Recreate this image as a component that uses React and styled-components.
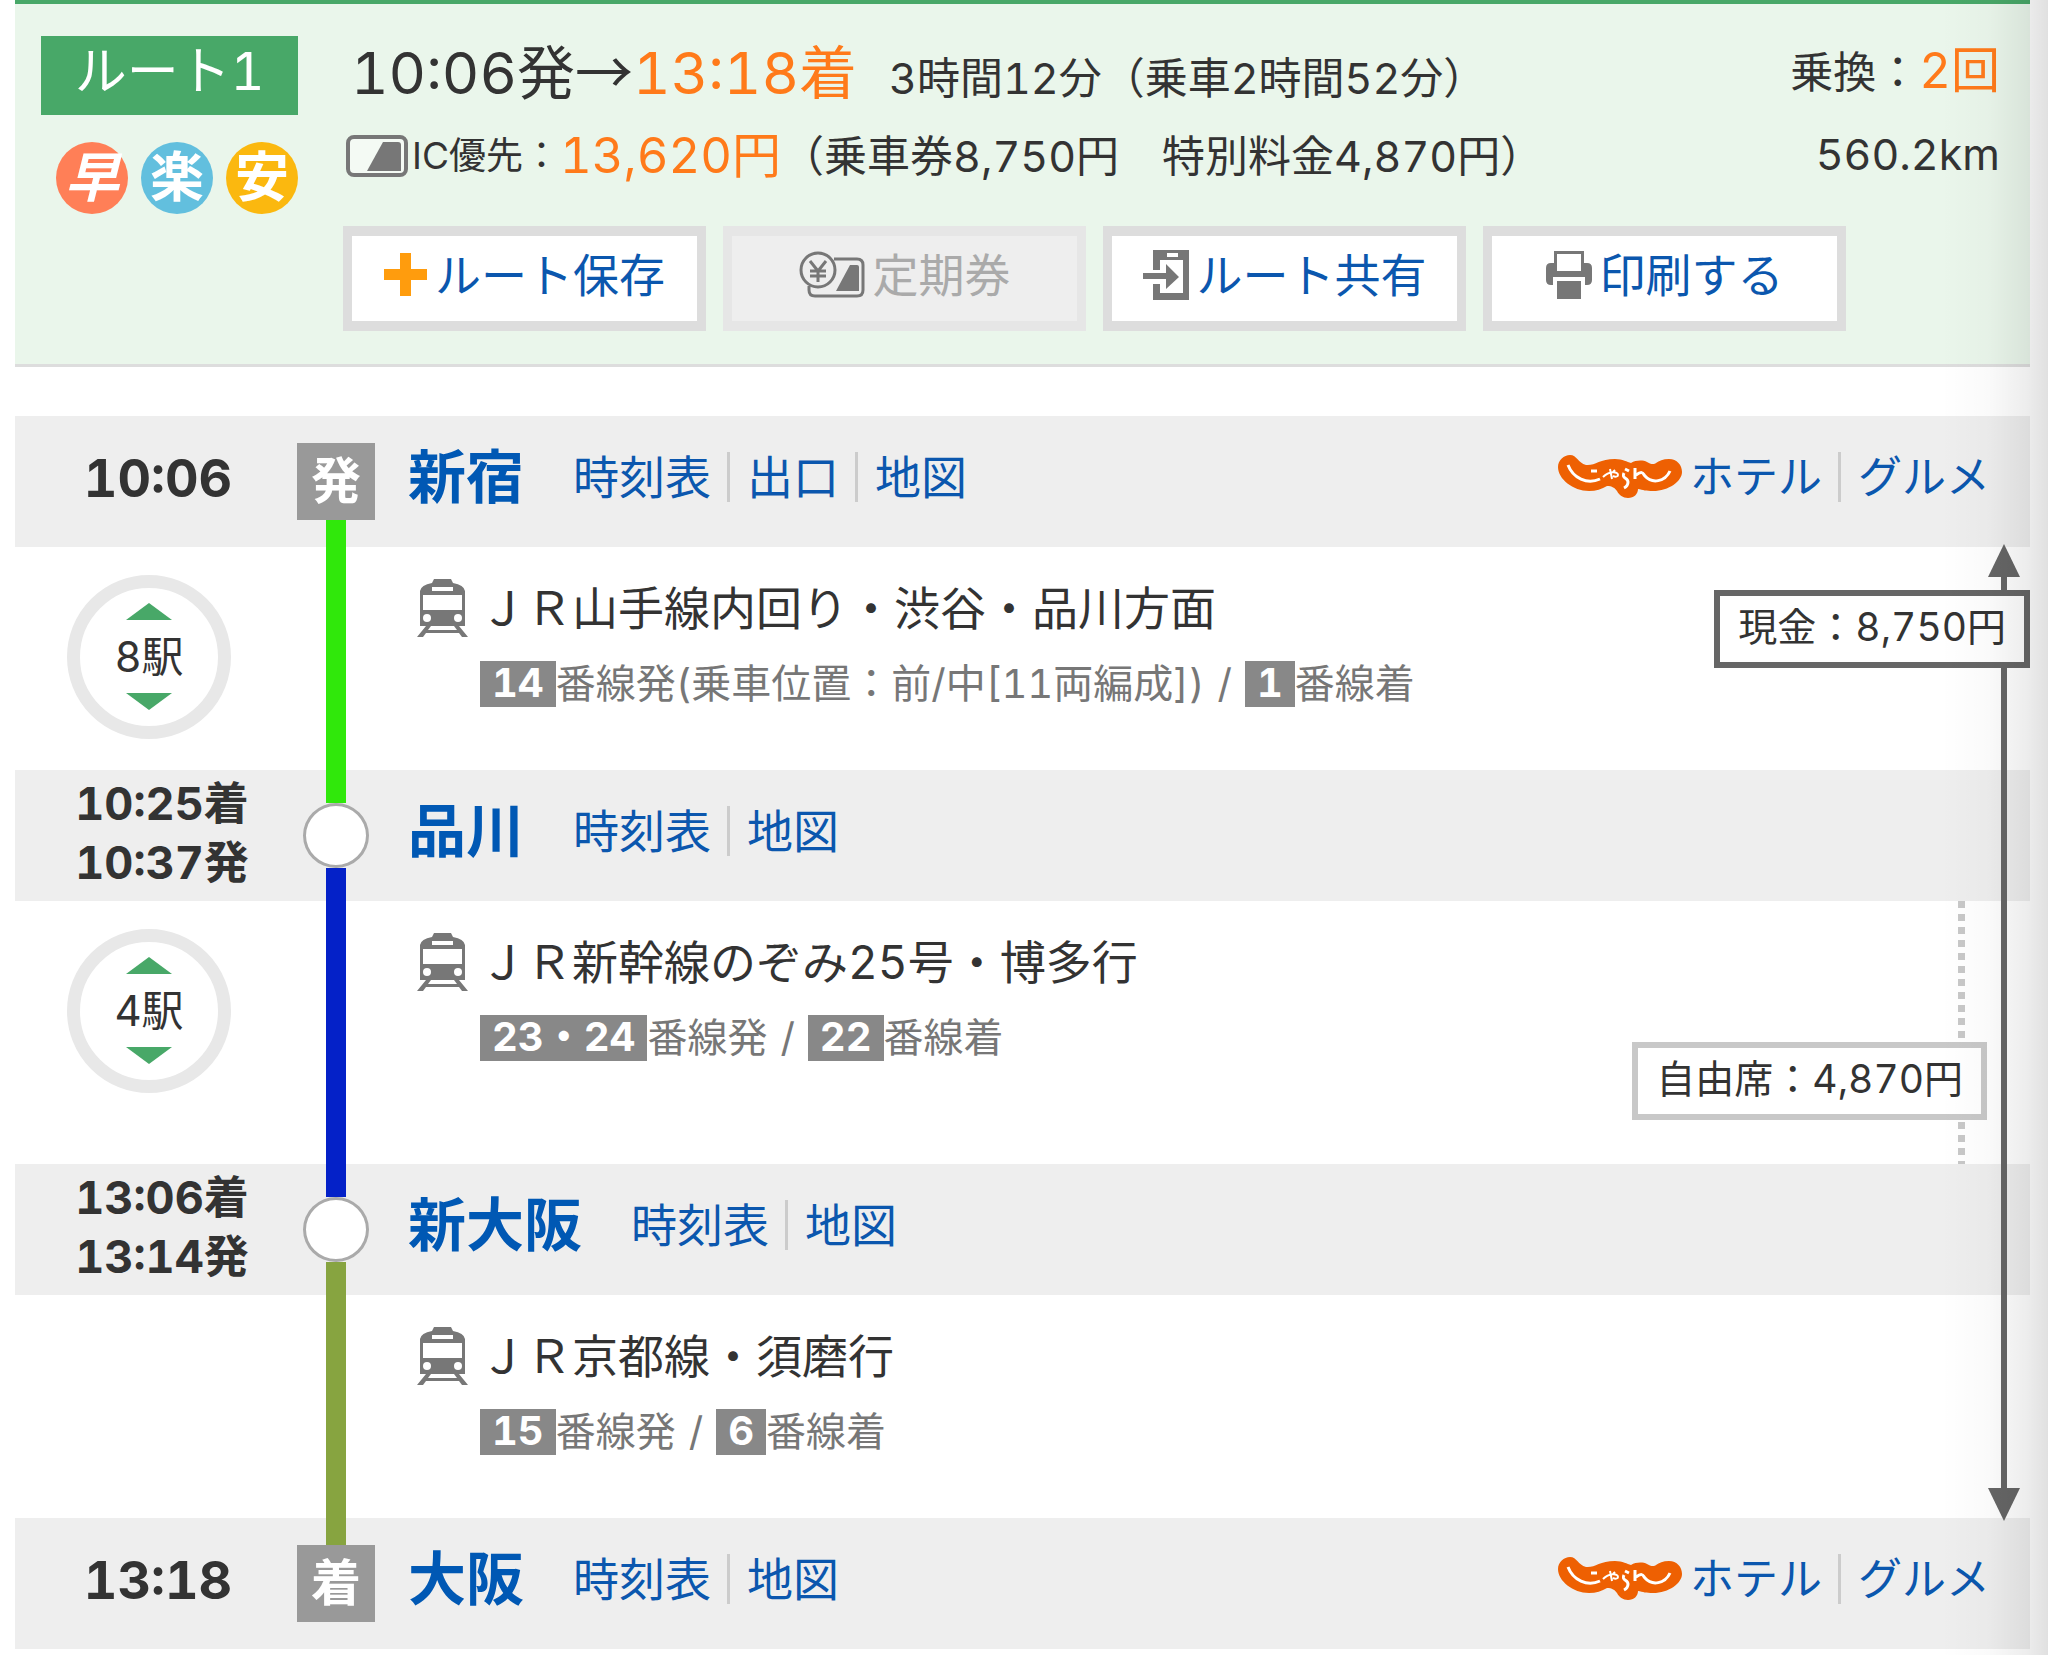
import React from 'react'
import styled, { createGlobalStyle } from 'styled-components'

const GlobalStyle = createGlobalStyle`
  * {
    box-sizing: border-box;
  }
  body {
    margin: 0;
    background: #fff;
    color: #333;
    font-family: Inter, 'Noto Sans CJK JP', sans-serif;
    font-variant-numeric: tabular-nums;
  }
  button {
    font: inherit;
    color: inherit;
    cursor: pointer;
  }
  a {
    color: #0b57ae;
    text-decoration: none;
  }
`

const Page = styled.main`
  position: relative;
  padding: 0 18px 7px 15px;
  overflow: hidden;
`
const EdgeShade = styled.div`
  position: absolute;
  top: 0;
  right: 0;
  bottom: 0;
  width: 108px;
  pointer-events: none;
  background: linear-gradient(to right, transparent, rgba(0, 0, 0, 0.02) 45%, rgba(0, 0, 0, 0.07) 80%, rgba(0, 0, 0, 0.12));
`

/* summary */
const Summary = styled.header`
  display: grid;
  grid-template-columns: 257px 1fr;
  column-gap: 45px;
  padding: 32px 30px 33px 26px;
  border-top: 4px solid #48a868;
  border-bottom: 3px solid #ddd;
  background: #eaf6eb;
`
const RouteName = styled.h1`
  margin: 0 0 27px;
  font-size: 52px;
  font-weight: 400;
  line-height: 72px;
  padding-bottom: 7px;
  text-align: center;
  color: #fff;
  background: #48a868;
`
const Marks = styled.div`
  display: flex;
  justify-content: flex-end;
  gap: 13px;
`
const Mark = styled.span`
  width: 72px;
  height: 72px;
  border-radius: 50%;
  background: ${(p) => p.$color};
  color: #fff;
  font-size: 54px;
  font-weight: 700;
  font-style: ${(p) => (p.$slanted ? 'italic' : 'normal')};
  line-height: 72px;
  text-align: center;
`
const SummaryTop = styled.div`
  display: flex;
  justify-content: space-between;
  height: 190px;
  white-space: nowrap;
`
const TimeLine = styled.div`
  display: flex;
  align-items: baseline;
  gap: 32px;
  height: 70px;
  margin: 0 0 20px 8px;
  font-size: 58px;
  line-height: 66px;
`
const Wide = styled.span`
  font-family: 'Noto Sans CJK JP', sans-serif;
`
const Hot = styled.span`
  color: #ff7a1a;
  font-size: ${(p) => p.$size || 58}px;
`
const Small = styled.span`
  font-size: 43px;
`
const FareLine = styled.div`
  display: flex;
  align-items: center;
  height: 60px;
  padding-left: 3px;
  font-size: 43px;
  line-height: 60px;
`
const FareKind = styled.span`
  margin-left: 4px;
  font-size: 37px;
`
const Actions = styled.div`
  display: flex;
  gap: 17px;
`
const ActionButton = styled.button`
  display: flex;
  align-items: center;
  justify-content: center;
  gap: 8px;
  width: 363px;
  height: 105px;
  padding: 0 0 8px;
  border: solid #ddd;
  border-width: 10px 9px;
  background: #fff;
  color: #0b57ae;
  font-size: 46px;
  line-height: 60px;
  white-space: nowrap;
  &:disabled {
    border-color: #e6e6e6;
    background: #eee;
    color: #aaa;
    cursor: default;
  }
`
const SummaryTotals = styled.div`
  text-align: right;
  font-size: 43px;
  line-height: 70px;
`
const Distance = styled.div`
  margin-top: 12px;
`

/* route */
const Route = styled.section`
  position: relative;
  margin-top: 49px;
`
const Row = styled.div`
  display: grid;
  grid-template-columns: 282px 78px 1fr;
`
const StationRow = styled(Row)`
  height: 131px;
  background: #eee;
`
const LegRow = styled(Row)`
  position: relative;
  height: ${(p) => (p.$tall ? 263 : 223)}px;
`
const Times = styled.div`
  display: flex;
  flex-direction: column;
  justify-content: center;
  padding: 0 0 6px ${(p) => (p.$single ? 4 : 12)}px;
  text-align: center;
  font-weight: 700;
  font-size: ${(p) => (p.$single ? 52 : 45)}px;
  line-height: 59px;
`
const Track = styled.div`
  display: flex;
  flex-direction: column;
  align-items: center;
`
const Line = styled.div`
  flex: 1;
  width: 20px;
  background: ${(p) => p.$color || 'transparent'};
`
const EndMark = styled.div`
  width: 78px;
  height: 77px;
  background: #999;
  color: #fff;
  font-size: 50px;
  font-weight: 700;
  line-height: 76px;
  text-align: center;
`
const StopMark = styled.div`
  width: 66px;
  height: 65px;
  border: 3px solid #aaa;
  border-radius: 50%;
  background: #fff;
`
const StationBody = styled.div`
  display: flex;
  align-items: center;
  padding: 0 40px 10px 33px;
  white-space: nowrap;
`
const StationName = styled.a`
  margin-right: 49px;
  font-size: 58px;
  font-weight: 700;
  line-height: 62px;
  color: #0058b4;
`
const Links = styled.nav`
  display: flex;
  align-items: center;
  font-size: ${(p) => p.$size || 46}px;
  line-height: 50px;
  a + a {
    margin-left: 16px;
    padding-left: 17px;
    border-left: 3px solid #ccc;
  }
`
const Nearby = styled.div`
  display: flex;
  align-items: center;
  gap: 8px;
  margin-left: auto;
`
const StopCount = styled.button`
  display: flex;
  flex-direction: column;
  align-items: center;
  justify-content: space-between;
  width: 164px;
  height: 164px;
  margin: 28px 0 0 52px;
  padding: 15px 0 16px;
  border: 13px solid #e8e8e8;
  border-radius: 50%;
  background: #fff;
  font-size: 42px;
  line-height: 50px;
`
const LegBody = styled.div`
  padding: 31px 0 0 42px;
`
const LegTitle = styled.div`
  display: flex;
  align-items: center;
  gap: 12px;
  font-size: 46px;
  line-height: 60px;
`
const Platforms = styled.div`
  display: flex;
  align-items: center;
  margin: 23px 0 0 63px;
  color: #777;
  font-size: 40px;
  line-height: 46px;
  white-space: nowrap;
`
const Platform = styled.b`
  height: 46px;
  padding: 0 12px;
  background: #888;
  color: #fff;
  line-height: 44px;
`
const Slash = styled.span`
  margin: 0 13px;
`

/* fares laid over the rows */
const CashSpan = styled.div`
  position: absolute;
  top: 128px;
  right: 10px;
  bottom: 128px;
  display: flex;
  flex-direction: column;
  align-items: center;
  width: 32px;
`
const CashLine = styled.div`
  flex: 1;
  width: 6px;
  background: #666;
`
const SeatLine = styled.div`
  position: absolute;
  top: 0;
  right: 65px;
  bottom: 0;
  width: 7px;
  background: repeating-linear-gradient(#c8c8c8 0 7px, transparent 7px 13px);
`
const FareBox = styled.div`
  position: absolute;
  top: ${(p) => p.$top}px;
  right: ${(p) => p.$right}px;
  padding: 6px 18px 10px;
  border: 6px solid ${(p) => p.$color};
  background: #fff;
  font-size: 39px;
  line-height: 50px;
  white-space: nowrap;
`

const CardIcon = () => (
  <svg width="62" height="42" viewBox="0 0 62 42" aria-hidden="true">
    <rect x="2" y="2" width="58" height="38" rx="6" fill="#f4faf4" stroke="#777" strokeWidth="4" />
    <path d="M21 36 37 7h15q3 0 3 3v26z" fill="#777" />
  </svg>
)

const PlusIcon = () => (
  <svg width="43" height="43" viewBox="0 0 43 43" aria-hidden="true">
    <path d="M16 0h11v16h16v11H27v16H16V27H0V16h16z" fill="#ff9c0d" />
  </svg>
)

const PassIcon = () => (
  <svg width="66" height="48" viewBox="0 0 66 48" fill="none" stroke="#777" strokeWidth="3" aria-hidden="true">
    <path d="M35 8h23q6 0 6 6v25q0 6-6 6H16q-6 0-6-6v-4" />
    <path d="M37 40 51 14h7q2 0 2 2v24z" fill="#777" stroke="none" />
    <circle cx="19" cy="19" r="17" />
    <path d="m11 10 8 10 8-10M19 20v11M11 20h16M11 25h16" />
  </svg>
)

const ShareIcon = () => (
  <svg width="46" height="50" viewBox="0 0 46 50" aria-hidden="true">
    <path d="M10 0h36v50H10V34h7v9h23V10H17v10h-7zM24 3v4h11V3z" fill="#777" fillRule="evenodd" />
    <path d="M0 23h23V14l13 13-13 12V29H0z" fill="#777" />
  </svg>
)

const PrinterIcon = () => (
  <svg width="46" height="48" viewBox="0 0 46 48" aria-hidden="true">
    <path d="M8 0h30v12h3q5 0 5 5v12q0 5-5 5h-2v-8H7v8H5q-5 0-5-5V17q0-5 5-5h3zM11 3v17h24V3z" fill="#777" fillRule="evenodd" />
    <path d="M11 30h24v18H11z" fill="#777" />
  </svg>
)

const TrainIcon = () => (
  <svg width="51" height="58" viewBox="0 0 51 58" aria-hidden="true">
    <path
      d="M17 0h17l2 4q11 2 12 8v35h-6l9 11h-6l-3-4H9l-3 4H0l9-11H3V12q1-6 12-8zM15 8v4h21V8zM6 16v15h39V16zM14 47l-3 4h29l-3-4z"
      fill="#777"
      fillRule="evenodd"
    />
    <circle cx="10" cy="39" r="4" fill="#fff" />
    <circle cx="41" cy="39" r="4" fill="#fff" />
  </svg>
)

const Triangle = ({ down, width = 46, height = 17, color = '#48a868' }) => (
  <svg width={width} height={height} viewBox="0 0 46 17" preserveAspectRatio="none" aria-hidden="true">
    <path d={down ? 'M0 0h46L23 17z' : 'M0 17h46L23 0z'} fill={color} />
  </svg>
)

const JalanLogo = () => (
  <svg width="124" height="44" viewBox="0 0 124 44" role="img" aria-label="じゃらん">
    <path
      d="M0 12C0 5 6 0 12 0c7 0 8 8 16 10 9 1 13-6 29-6 8 0 12 3 16 4 5-3 12-3 16-1 3 2 7 3 9 1 3-2 7-4 13-4 8 0 13 6 13 13 0 9-13 19-29 19-7 0-10-1-15-2 0 5-4 9-10 9-5 0-9-3-11-7-2-3-5-5-10-5-5 3-11 5-18 5C15 36 0 24 0 12z"
      fill="#ee6002"
    />
    <g fill="none" stroke="#fff" strokeWidth="3">
      <path d="M10 10c5 13 19 20 32 14" />
      <path d="M33 16h6" />
      <path d="M45 22c6-6 15-6 15-2 0 2-3 2-5 1M52 14l2 10M57 15l-2 2" strokeWidth="2" />
      <path d="M67 14l4 2M66 18c-3 6 4 4 4 9q0 4-4 6" />
      <path d="M77 13v11M78 20c7-5 7-1 9 1 7 8 20 6 25-5" />
    </g>
  </svg>
)

const GREEN = '#30e80b'
const BLUE = '#0421c8'
const OLIVE = '#87a440'

const Station = ({ times, mark, name, links, above, below, nearby }) => (
  <StationRow>
    <Times $single={times.length === 1}>
      {times.map((time) => (
        <div key={time}>{time}</div>
      ))}
    </Times>
    <Track>
      <Line $color={above} />
      {mark ? <EndMark>{mark}</EndMark> : <StopMark />}
      <Line $color={below} />
    </Track>
    <StationBody>
      <StationName href="#">{name}</StationName>
      <Links>
        {links.map((link) => (
          <a href="#" key={link}>{link}</a>
        ))}
      </Links>
      {nearby && (
        <Nearby>
          <JalanLogo />
          <Links $size={44}>
            <a href="#">ホテル</a>
            <a href="#">グルメ</a>
          </Links>
        </Nearby>
      )}
    </StationBody>
  </StationRow>
)

const Leg = ({ stops, color, title, tall, from, note, to, children }) => (
  <LegRow $tall={tall}>
    <div>
      {stops && (
        <StopCount>
          <Triangle />
          {stops}
          <Triangle down />
        </StopCount>
      )}
    </div>
    <Track>
      <Line $color={color} />
    </Track>
    <LegBody>
      <LegTitle>
        <TrainIcon />
        {title}
      </LegTitle>
      <Platforms>
        <Platform>{from}</Platform>
        <span>番線発{note}</span>
        <Slash>/</Slash>
        <Platform>{to}</Platform>
        <span>番線着</span>
      </Platforms>
    </LegBody>
    {children}
  </LegRow>
)

const App = () => (
  <>
    <GlobalStyle />
    <Page>
      <Summary>
        <div>
          <RouteName>ルート1</RouteName>
          <Marks>
            <Mark $color="#ff7f57" $slanted>早</Mark>
            <Mark $color="#62bfde">楽</Mark>
            <Mark $color="#fbb80f">安</Mark>
          </Marks>
        </div>
        <div>
          <SummaryTop>
            <div>
              <TimeLine>
                <span>
                  10:06発<Wide>→</Wide><Hot>13:18着</Hot>
                </span>
                <Small>3時間12分（乗車2時間52分）</Small>
              </TimeLine>
              <FareLine>
                <CardIcon />
                <FareKind>IC優先：</FareKind>
                <Hot $size={49}>13,620円</Hot>
                <span>（乗車券8,750円　特別料金4,870円）</span>
              </FareLine>
            </div>
            <SummaryTotals>
              <div>乗換：<Hot $size={49}>2回</Hot></div>
              <Distance>560.2km</Distance>
            </SummaryTotals>
          </SummaryTop>
          <Actions>
            <ActionButton><PlusIcon />ルート保存</ActionButton>
            <ActionButton disabled><PassIcon />定期券</ActionButton>
            <ActionButton><ShareIcon />ルート共有</ActionButton>
            <ActionButton><PrinterIcon />印刷する</ActionButton>
          </Actions>
        </div>
      </Summary>

      <Route>
        <Station times={['10:06']} mark="発" name="新宿" links={['時刻表', '出口', '地図']} below={GREEN} nearby />
        <Leg
          stops="8駅"
          color={GREEN}
          title="ＪＲ山手線内回り・渋谷・品川方面"
          from="14"
          note="(乗車位置：前/中[11両編成])"
          to="1"
        />
        <Station times={['10:25着', '10:37発']} name="品川" links={['時刻表', '地図']} above={GREEN} below={BLUE} />
        <Leg tall stops="4駅" color={BLUE} title="ＪＲ新幹線のぞみ25号・博多行" from="23・24" to="22">
          <SeatLine />
          <FareBox $top={141} $right={43} $color="#c8c8c8">自由席：4,870円</FareBox>
        </Leg>
        <Station times={['13:06着', '13:14発']} name="新大阪" links={['時刻表', '地図']} above={BLUE} below={OLIVE} />
        <Leg color={OLIVE} title="ＪＲ京都線・須磨行" from="15" to="6" />
        <Station times={['13:18']} mark="着" name="大阪" links={['時刻表', '地図']} above={OLIVE} nearby />

        <CashSpan>
          <Triangle width={32} height={33} color="#666" />
          <CashLine />
          <Triangle down width={32} height={33} color="#666" />
        </CashSpan>
        <FareBox $top={174} $right={0} $color="#666">現金：8,750円</FareBox>
      </Route>
      <EdgeShade />
    </Page>
  </>
)

export default App
